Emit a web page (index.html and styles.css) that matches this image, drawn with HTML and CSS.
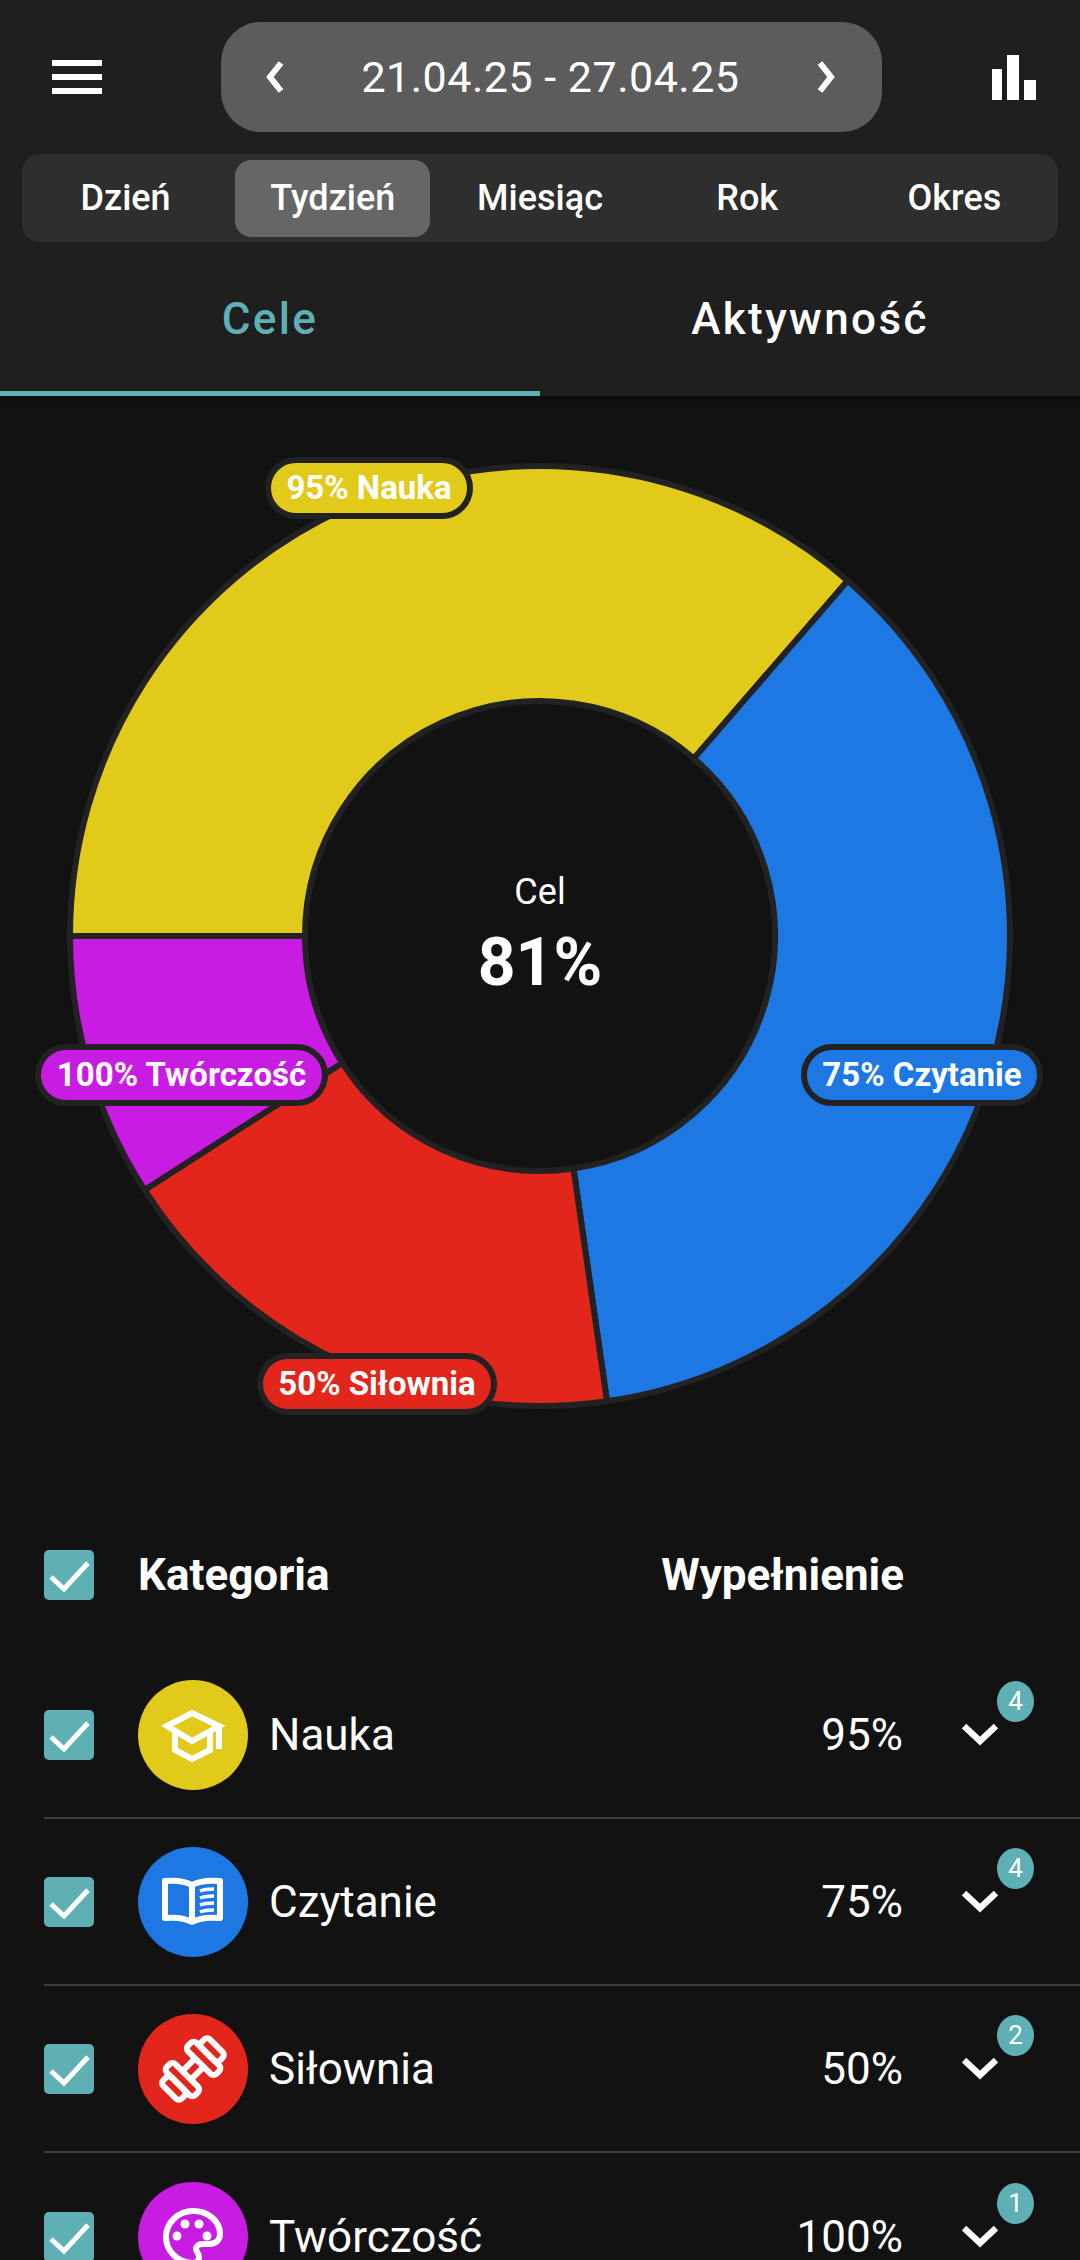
FILE: index.html
```html
<!DOCTYPE html>
<html lang="pl">
<head>
  <meta charset="UTF-8">
  <title>Cele</title>
  <link rel="stylesheet" href="styles.css">
</head>
<body>
  <header class="top">
    <div class="top-row">
      <svg class="menu-icon" viewBox="0 0 50 34"><path d="M0 3h50M0 17h50M0 31h50" stroke="#fff" stroke-width="6"/></svg>
      <div class="date-pill">
        <svg class="arrow" viewBox="0 0 20 32"><path d="M16 2L5 16l11 14" fill="none" stroke="#fff" stroke-width="6"/></svg>
        <span>21.04.25 - 27.04.25</span>
        <svg class="arrow" viewBox="0 0 20 32"><path d="M4 2l11 14L4 30" fill="none" stroke="#fff" stroke-width="6"/></svg>
      </div>
      <svg class="stats-icon" viewBox="0 0 44 45"><path d="M0 14h10v31H0zM15 0h12v45H15zM32 25h12v20H32z" fill="#fff"/></svg>
    </div>
    <nav class="periods">
      <a>Dzień</a>
      <a class="active">Tydzień</a>
      <a>Miesiąc</a>
      <a>Rok</a>
      <a>Okres</a>
    </nav>
    <div class="tabs">
      <a class="active">Cele</a>
      <a>Aktywność</a>
    </div>
  </header>

  <section class="chart">
    <svg class="donut" viewBox="0 -2 1080 1040">
      <g stroke="#222" stroke-width="6" stroke-linejoin="round">
        <path fill="#e2ca1b" d="M70 538A470 470 0 0 1 847.7 182.7L693.9 360.4A235 235 0 0 0 305 538Z"/>
        <path fill="#1e78e4" d="M847.7 182.7A470 470 0 0 1 607 1003.2L573.5 770.6A235 235 0 0 0 693.9 360.4Z"/>
        <path fill="#e2261c" d="M607 1003.2A470 470 0 0 1 144.5 791.9L342.2 664.9A235 235 0 0 0 573.5 770.6Z"/>
        <path fill="#c91ce2" d="M144.5 791.9A470 470 0 0 1 70 538H305A235 235 0 0 0 342.2 664.9Z"/>
      </g>
    </svg>
    <div class="center-label">
      <span class="center-title">Cel</span>
      <span class="center-value">81%</span>
    </div>
    <span class="slice-tag tag-nauka">95% Nauka</span>
    <span class="slice-tag tag-czytanie">75% Czytanie</span>
    <span class="slice-tag tag-silownia">50% Siłownia</span>
    <span class="slice-tag tag-tworczosc">100% Twórczość</span>
  </section>

  <section class="table">
    <div class="table-head">
      <span class="check"><svg viewBox="0 0 50 50"><path d="M7 27l13 12 24-26" fill="none" stroke="#fff" stroke-width="5"/></svg></span>
      <span class="head-name">Kategoria</span>
      <span class="head-fill">Wypełnienie</span>
    </div>

    <div class="row">
      <span class="check"><svg viewBox="0 0 50 50"><path d="M7 27l13 12 24-26" fill="none" stroke="#fff" stroke-width="5"/></svg></span>
      <span class="cat-icon yellow">
        <svg viewBox="0 0 110 110" fill="none" stroke="#fff" stroke-width="6"><path d="M29 46l25-13 27 13-27 15z"/><path d="M37 51v19l17 9 18-9V51"/><path d="M81 46v23"/></svg>
      </span>
      <span class="name">Nauka</span>
      <span class="percent">95%</span>
      <span class="expand">
        <svg viewBox="0 0 36 24"><path d="M2 3l16 15L34 3" fill="none" stroke="#fff" stroke-width="6.5"/></svg>
        <i class="badge">4</i>
      </span>
    </div>

    <div class="row">
      <span class="check"><svg viewBox="0 0 50 50"><path d="M7 27l13 12 24-26" fill="none" stroke="#fff" stroke-width="5"/></svg></span>
      <span class="cat-icon blue">
        <svg viewBox="0 0 110 110" fill="none" stroke="#fff" stroke-width="6" stroke-linejoin="round"><path d="M54 38c-7-4-16-5-27-4v37c11-1 20 0 27 4 7-4 16-5 28-4V34c-12-1-21 0-28 4z"/><path d="M54 38v37"/><path d="M62 44c5-2 9-2 14-2M62 51c5-2 9-2 14-2M62 58c5-2 9-2 14-2M62 65c5-2 9-2 14-2" stroke-width="3.5"/></svg>
      </span>
      <span class="name">Czytanie</span>
      <span class="percent">75%</span>
      <span class="expand">
        <svg viewBox="0 0 36 24"><path d="M2 3l16 15L34 3" fill="none" stroke="#fff" stroke-width="6.5"/></svg>
        <i class="badge">4</i>
      </span>
    </div>

    <div class="row">
      <span class="check"><svg viewBox="0 0 50 50"><path d="M7 27l13 12 24-26" fill="none" stroke="#fff" stroke-width="5"/></svg></span>
      <span class="cat-icon red">
        <svg viewBox="0 0 110 110" fill="none" stroke="#fff" stroke-width="6" stroke-linejoin="round"><g transform="rotate(-45 55 55)"><rect x="22" y="42" width="12" height="26" rx="4"/><rect x="34" y="35" width="12" height="40" rx="4"/><rect x="64" y="35" width="12" height="40" rx="4"/><rect x="76" y="42" width="12" height="26" rx="4"/><path d="M46 49h18M46 61h18"/></g></svg>
      </span>
      <span class="name">Siłownia</span>
      <span class="percent">50%</span>
      <span class="expand">
        <svg viewBox="0 0 36 24"><path d="M2 3l16 15L34 3" fill="none" stroke="#fff" stroke-width="6.5"/></svg>
        <i class="badge">2</i>
      </span>
    </div>

    <div class="row">
      <span class="check"><svg viewBox="0 0 50 50"><path d="M7 27l13 12 24-26" fill="none" stroke="#fff" stroke-width="5"/></svg></span>
      <span class="cat-icon purple">
        <svg viewBox="0 0 110 110" fill="none" stroke="#fff" stroke-width="6"><path d="M55 29c-15 0-27 12-27 26s12 26 27 26c4 0 6-3 6-6 0-4-3-5-3-8s3-5 6-5h7c8 0 11-5 11-10 0-13-12-23-27-23z"/><g fill="#fff" stroke="none"><circle cx="39" cy="54" r="4.5"/><circle cx="47" cy="42" r="4.5"/><circle cx="61" cy="42" r="4.5"/><circle cx="69" cy="54" r="4.5"/></g></svg>
      </span>
      <span class="name">Twórczość</span>
      <span class="percent">100%</span>
      <span class="expand">
        <svg viewBox="0 0 36 24"><path d="M2 3l16 15L34 3" fill="none" stroke="#fff" stroke-width="6.5"/></svg>
        <i class="badge">1</i>
      </span>
    </div>
  </section>
</body>
</html>
```

FILE: styles.css
```css
html, body { margin: 0; padding: 0; }
body {
  width: 1080px;
  height: 2260px;
  overflow: hidden;
  background: #121212;
  color: #fff;
  font-family: Roboto, "Liberation Sans", sans-serif;
}

.top { background: #1f1f1f; height: 396px; position: relative; }
.top::after {
  content: "";
  position: absolute;
  left: 0; right: 0; top: 396px;
  height: 14px;
  background: linear-gradient(#0c0c0c, #121212);
}
.top-row {
  display: flex;
  align-items: center;
  height: 154px;
}
.menu-icon { width: 50px; height: 34px; margin: 0 0 0 52px; }
.date-pill {
  width: 661px;
  height: 110px;
  margin-left: 119px;
  background: #5c5c5c;
  border-radius: 40px;
  display: flex;
  align-items: center;
  justify-content: space-between;
  padding: 0 46px 0 44px;
  box-sizing: border-box;
  font-size: 43px;
  letter-spacing: .5px;
}
.arrow { width: 20px; height: 32px; }
.stats-icon { width: 44px; height: 45px; margin-left: 110px; }

.periods {
  display: flex;
  margin: 0 22px;
  height: 88px;
  background: #2e2e2e;
  border-radius: 18px;
}
.periods a {
  flex: 1;
  margin: 6px 6px 5px;
  padding-bottom: 2px;
  box-sizing: border-box;
  display: flex;
  align-items: center;
  justify-content: center;
  font-size: 36px;
  font-weight: 500;
  border-radius: 16px;
}
.periods a.active { background: #666; }

.tabs { display: flex; height: 154px; }
.tabs a {
  flex: 1;
  display: flex;
  align-items: center;
  justify-content: center;
  font-size: 44px;
  font-weight: 500;
  letter-spacing: 2.4px;
  height: 149px;
  padding-top: 5px;
  box-sizing: border-box;
}
.tabs a.active { color: #5fb0b5; border-bottom: 5px solid #5fb0b5; height: 154px; }

.chart { position: relative; height: 1040px; }
.donut { display: block; width: 1080px; height: 1040px; }
.center-label {
  position: absolute;
  left: 340px; top: 474px;
  width: 400px;
  display: flex;
  flex-direction: column;
  align-items: center;
}
.center-title { font-size: 36px; line-height: 44px; }
.center-value { font-size: 66px; font-weight: 700; line-height: 98px; }

.slice-tag {
  position: absolute;
  height: 62px;
  padding-bottom: 2px;
  box-sizing: border-box;
  border: 6px solid #222;
  border-radius: 31px;
  display: flex;
  align-items: center;
  justify-content: center;
  font-size: 33px;
  font-weight: 700;
  white-space: nowrap;
}
.tag-nauka { left: 265px; top: 61px; width: 208px; background: #e2ca1b; }
.tag-czytanie { left: 801px; top: 648px; width: 242px; background: #1e78e4; }
.tag-silownia { left: 257px; top: 957px; width: 240px; background: #e2261c; }
.tag-tworczosc { left: 35px; top: 648px; width: 293px; background: #c91ce2; }

.table { padding-left: 44px; }
.table-head {
  display: flex;
  align-items: center;
  height: 216px;
  padding-top: 62px;
  box-sizing: border-box;
  font-size: 44px;
  font-weight: 700;
}
.head-name { margin-left: 44px; width: 400px; }
.head-fill { width: 366px; text-align: right; }

.row {
  display: flex;
  align-items: center;
  height: 167px;
  box-sizing: border-box;
  border-bottom: 2px solid #3d3d3d;
}
.row:last-child { border-bottom: 0; }
.check {
  width: 50px;
  height: 50px;
  flex: none;
  background: #5fb0b5;
  border-radius: 5px;
}
.check svg { display: block; width: 50px; height: 50px; }
.cat-icon {
  width: 110px;
  height: 110px;
  flex: none;
  margin-left: 44px;
  border-radius: 50%;
}
.cat-icon svg { display: block; width: 110px; height: 110px; }
.yellow { background: #e2ca1b; }
.blue { background: #1e78e4; }
.red { background: #e2261c; }
.purple { background: #c91ce2; }
.name { margin-left: 21px; width: 400px; font-size: 44px; }
.percent { width: 234px; text-align: right; font-size: 44px; }
.expand { position: relative; margin-left: 59px; width: 36px; height: 24px; }
.expand svg { display: block; width: 36px; height: 24px; }
.badge {
  position: absolute;
  left: 35px; top: -42px;
  width: 37px;
  height: 41px;
  border-radius: 50%;
  background: #5fb0b5;
  display: flex;
  align-items: center;
  justify-content: center;
  font-style: normal;
  font-size: 26px;
}
```
